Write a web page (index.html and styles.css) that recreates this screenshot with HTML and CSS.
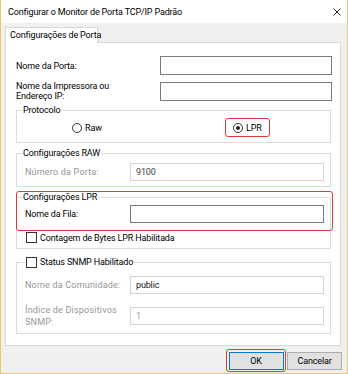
FILE: index.html
```html
<!DOCTYPE html>
<html lang="pt">
<head>
    <meta charset="UTF-8">
    <title>Configurar o Monitor de Porta TCP/IP Padrão</title>
    <link rel="stylesheet" href="styles.css">
</head>
<body>
    <div class="window">
        <div class="titlebar">
            <span class="title">Configurar o Monitor de Porta TCP/IP Padrão</span>
            <span class="close">
                <svg width="8" height="8" viewBox="0 0 8 8"><path d="M0.5 0.5 L7.5 7.5 M7.5 0.5 L0.5 7.5" stroke="#222" stroke-width="1"/></svg>
            </span>
        </div>

        <div class="client">
            <div class="tab">Configurações de Porta</div>
            <div class="panel">
                <div class="row row-port">
                    <label class="row-label">Nome da Porta:</label>
                    <div class="field"></div>
                </div>
                <div class="row row-printer">
                    <label class="row-label">Nome da Impressora ou<br>Endereço IP:</label>
                    <div class="field"></div>
                </div>

                <fieldset class="group group-proto">
                    <legend>Protocolo</legend>
                    <div class="proto-options">
                        <label class="radio radio-raw"><span class="dot"></span>Raw</label>
                        <label class="radio radio-on mark"><span class="dot"></span>LPR</label>
                    </div>
                </fieldset>

                <fieldset class="group group-raw">
                    <legend>Configurações RAW</legend>
                    <div class="sub-row disabled">
                        <label class="sub-label">Número da Porta:</label>
                        <div class="field field-off">9100</div>
                    </div>
                </fieldset>

                <fieldset class="group group-lpr">
                    <legend>Configurações LPR</legend>
                    <div class="mark mark-lpr"></div>
                    <div class="sub-row">
                        <label class="sub-label">Nome da Fila:</label>
                        <div class="field"></div>
                    </div>
                    <label class="check check-bytes"><span class="box"></span>Contagem de Bytes LPR Habilitada</label>
                </fieldset>

                <fieldset class="group group-snmp">
                    <legend><label class="check"><span class="box"></span>Status SNMP Habilitado</label></legend>
                    <div class="sub-row disabled row-community">
                        <label class="sub-label">Nome da Comunidade:</label>
                        <div class="field field-off field-dark">public</div>
                    </div>
                    <div class="sub-row disabled row-index">
                        <label class="sub-label">Índice de Dispositivos<br>SNMP:</label>
                        <div class="field field-off field-light">1</div>
                    </div>
                </fieldset>
            </div>

            <div class="buttons">
                <div class="mark mark-ok"><button type="button" class="btn btn-default">OK</button></div>
                <button type="button" class="btn">Cancelar</button>
            </div>
        </div>
    </div>
</body>
</html>
```

FILE: styles.css
```css
body {
    margin: 0;
    padding: 0;
    font-family: Roboto, "Liberation Sans", sans-serif;
    font-size: 9px;
    letter-spacing: -0.15px;
    color: #000;
    background: #fff;
}

.window {
    width: 348px;
    height: 374px;
    box-sizing: border-box;
    border: 1px solid #ebc95e;
    border-top: none;
    display: flex;
    flex-direction: column;
    background: #f0f0f0;
}

.titlebar {
    height: 23px;
    flex: none;
    background: #fff;
    display: flex;
    align-items: center;
    justify-content: space-between;
    padding: 0 6px 0 7px;
}

.close {
    display: flex;
}

.client {
    flex: 1;
    padding: 4px 6px 0 4px;
}

.tab {
    position: relative;
    width: 87px;
    height: 15px;
    margin-bottom: -1px;
    background: #fff;
    border: 1px solid #d9d9d9;
    border-bottom: none;
    line-height: 15px;
    padding-left: 4px;
    white-space: nowrap;
}

.panel {
    height: 304px;
    box-sizing: border-box;
    background: #fff;
    border: 1px solid #d9d9d9;
    padding: 13px 8px 0 10px;
}

.row {
    display: flex;
    align-items: center;
    justify-content: space-between;
}

.row-printer {
    margin-top: 6px;
}

.row-label {
    line-height: 10px;
}

.field {
    box-sizing: border-box;
    height: 19px;
    border: 1px solid #7a7a7a;
    background: #fff;
    padding: 3px 0 0 5px;
}

.row .field {
    width: 172px;
}

.field-off {
    border-color: #d4d4d4;
    color: #444;
}

.field-dark {
    color: #222;
}

.field-light {
    color: #999;
}

.group {
    margin: 0;
    padding: 0 6px 0 8px;
    width: 315px;
    box-sizing: border-box;
    border: 1px solid #dcdcdc;
    position: relative;
}

.group legend {
    padding: 0 1px;
    margin-left: -3px;
    line-height: 10px;
}

.group-proto {
    height: 38px;
    margin-top: 4px;
}

.proto-options {
    display: flex;
    padding-left: 47px;
    margin-top: 3px;
}

.radio {
    display: flex;
    align-items: center;
    gap: 3px;
}

.radio .dot {
    width: 8px;
    height: 8px;
    border: 1px solid #333;
    border-radius: 50%;
    position: relative;
}

.radio-raw {
    width: 153px;
}

.radio-on .dot::after {
    content: "";
    position: absolute;
    left: 2px;
    top: 2px;
    width: 4px;
    height: 4px;
    border-radius: 50%;
    background: #222;
}

.mark {
    border: 1.5px solid #e0393c;
    border-radius: 3px;
}

.radio.mark {
    height: 19px;
    box-sizing: border-box;
    padding: 0 7px 0 7px;
}

.group-raw {
    height: 39px;
    margin-top: 5px;
}

.sub-row {
    display: flex;
    align-items: center;
    justify-content: space-between;
}

.sub-row .field {
    width: 194px;
    height: 18px;
}

.group-raw .sub-row {
    margin-top: 5px;
}

.disabled .sub-label {
    color: #959595;
    letter-spacing: 0.2px;
}

.sub-label {
    line-height: 12px;
}

.group-lpr {
    height: 57px;
    margin-top: 5px;
}

.group-lpr .sub-row {
    margin-top: 3px;
}

.mark-lpr {
    position: absolute;
    left: -1px;
    right: -3px;
    top: -11px;
    height: 40px;
    box-sizing: border-box;
}

.check {
    display: flex;
    align-items: center;
    gap: 3px;
}

.check .box {
    width: 9px;
    height: 9px;
    border: 1px solid #333;
    background: #fff;
}

.check-bytes {
    margin-top: 9px;
    margin-left: 1px;
}

.group-snmp {
    height: 77px;
    margin-top: 8px;
}

.group-snmp legend {
    margin-left: 0;
    line-height: 11px;
}

.row-community {
    margin-top: 8px;
}

.row-index {
    margin-top: 10px;
}

.buttons {
    display: flex;
    justify-content: flex-end;
    align-items: center;
    gap: 1px;
    margin-top: 3px;
    margin-right: -1px;
}

.mark-ok {
    padding: 1.5px 1.5px;
}

.btn {
    width: 55px;
    height: 18px;
    background: #e1e1e1;
    border: 1px solid #adadad;
    font-family: inherit;
    font-size: 9px;
    letter-spacing: -0.15px;
    padding: 0;
}

.btn-default {
    border: 1px solid #0078d7;
}
```
